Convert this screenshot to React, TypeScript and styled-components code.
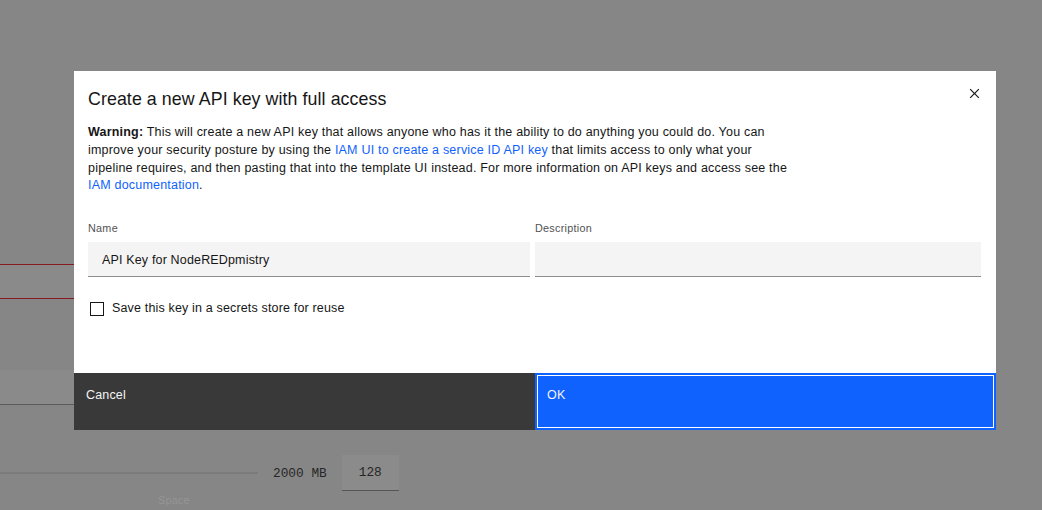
import React from "react";
import styled, { createGlobalStyle } from "styled-components";

const Global = createGlobalStyle`
  html, body { margin: 0; padding: 0; }
  body { font-family: "Liberation Sans", Arial, sans-serif; background: #868686; }
  * { box-sizing: border-box; }
`;

const Page = styled.div`
  position: relative;
  width: 1042px;
  height: 510px;
  overflow: hidden;
  background: #868686;
  display: flex;
  flex-direction: column;
  align-items: flex-start;
`;

const InvalidField = styled.div`
  margin-top: 264px;
  width: 520px;
  height: 35px;
  background: #8a8a8a;
  border-top: 1px solid #861c21;
  border-bottom: 1px solid #861c21;
`;

const PlainField = styled.div`
  margin-top: 71px;
  width: 520px;
  height: 35px;
  background: #8a8a8a;
  border-bottom: 1px solid #5c5c5c;
`;

const SliderRow = styled.div`
  margin-top: 50px;
  display: flex;
  align-items: center;
  height: 36px;
`;

const Track = styled.div`
  width: 258px;
  height: 2px;
  background: #7b7b7b;
`;

const RangeValue = styled.span`
  margin-left: 15px;
  font-family: "Liberation Mono", "DejaVu Sans Mono", monospace;
  font-size: 12.8px;
  color: #262626;
`;

const NumberBox = styled.div`
  margin-left: 15px;
  width: 57px;
  height: 36px;
  background: #8b8b8b;
  border-bottom: 1px solid #555555;
  display: flex;
  align-items: center;
  justify-content: center;
  font-family: "Liberation Mono", "DejaVu Sans Mono", monospace;
  font-size: 12.8px;
  color: #262626;
`;

const FaintLabel = styled.span`
  margin-left: 158px;
  margin-top: 2px;
  font-size: 10.7px;
  line-height: 14px;
  letter-spacing: 0.28px;
  color: #959595;
`;

const Scrim = styled.div`
  position: absolute;
  inset: 0;
  padding: 71px 0 0 74px;
`;

const Modal = styled.div`
  position: relative;
  width: 922px;
  height: 359px;
  background: #ffffff;
  display: flex;
  flex-direction: column;
  color: #161616;
`;

const Header = styled.div`
  padding: 16px 14px 0 14px;
`;

const Title = styled.h2`
  margin: 0;
  font-size: 17.8px;
  line-height: 25px;
  font-weight: 400;
  letter-spacing: 0.08px;
  color: #161616;
`;

const CloseButton = styled.button`
  position: absolute;
  top: 12.5px;
  right: 12.5px;
  width: 19px;
  height: 19px;
  padding: 0;
  border: 0;
  background: transparent;
  display: flex;
  align-items: center;
  justify-content: center;
  cursor: pointer;
`;

const Body = styled.div`
  flex: 1;
  padding: 12px 15px 0 14px;
  display: flex;
  flex-direction: column;
`;

const Warning = styled.p`
  margin: 0;
  font-size: 12.5px;
  line-height: 17.8px;
  letter-spacing: 0.2px;
  white-space: nowrap;
  color: #161616;
`;

const Link = styled.a`
  color: #0f62fe;
  text-decoration: none;
`;

const FieldGrid = styled.div`
  margin-top: 26px;
  display: grid;
  grid-template-columns: 442px 446px;
  column-gap: 5px;
`;

const Field = styled.div`
  display: flex;
  flex-direction: column;
`;

const Label = styled.label`
  font-size: 10.8px;
  line-height: 14px;
  letter-spacing: 0.28px;
  color: #525252;
  margin-bottom: 7px;
`;

const TextInput = styled.input`
  height: 35px;
  width: 100%;
  border: 0;
  border-bottom: 1px solid #8d8d8d;
  background: #f4f4f4;
  padding: 2px 14px 0 14px;
  font-family: "Liberation Sans", Arial, sans-serif;
  font-size: 12.5px;
  letter-spacing: 0.16px;
  color: #161616;
  outline: none;
`;

const CheckRow = styled.label`
  margin-top: 23px;
  display: flex;
  align-items: center;
  gap: 8px;
  font-size: 12.5px;
  line-height: 17.8px;
  letter-spacing: 0.16px;
  color: #161616;
  padding-left: 2px;
`;

const Box = styled.span`
  width: 14px;
  height: 14px;
  border: 1px solid #161616;
  background: #ffffff;
  display: inline-block;
`;

const Footer = styled.div`
  display: grid;
  grid-template-columns: 1fr 1fr;
  height: 57px;
`;

const FooterButton = styled.button<{ $primary?: boolean }>`
  border: 0;
  margin: 0;
  padding: 13.5px 12px;
  text-align: left;
  display: flex;
  align-items: flex-start;
  font-family: "Liberation Sans", Arial, sans-serif;
  font-size: 12.5px;
  line-height: 17.8px;
  letter-spacing: 0.16px;
  color: #f4f4f4;
  background: ${(p) => (p.$primary ? "#0f62fe" : "#393939")};
  box-shadow: ${(p) => (p.$primary ? "inset 0 0 0 2px #0f62fe, inset 0 0 0 3px #ffffff" : "none")};
  cursor: pointer;
`;

export default function App() {
  return (
    <>
      <Global />
      <Page>
        <InvalidField />
        <PlainField />
        <SliderRow>
          <Track />
          <RangeValue>2000 MB</RangeValue>
          <NumberBox>128</NumberBox>
        </SliderRow>
        <FaintLabel>Space</FaintLabel>
        <Scrim>
          <Modal role="dialog" aria-label="Create a new API key with full access">
            <Header>
              <Title>Create a new API key with full access</Title>
            </Header>
            <CloseButton aria-label="Close">
              <svg width="19" height="19" viewBox="0 0 32 32" fill="#161616">
                <path d="M24 9.4L22.6 8 16 14.6 9.4 8 8 9.4 14.6 16 8 22.6 9.4 24 16 17.4 22.6 24 24 22.6 17.4 16 24 9.4z" />
              </svg>
            </CloseButton>
            <Body>
              <Warning>
                <strong>Warning:</strong> This will create a new API key that allows anyone who has it the ability to do anything you could do. You can
                <br />
                improve your security posture by using the <Link href="#">IAM UI to create a service ID API key</Link> that limits access to only what your
                <br />
                pipeline requires, and then pasting that into the template UI instead. For more information on API keys and access see the
                <br />
                <Link href="#">IAM documentation</Link>.
              </Warning>
              <FieldGrid>
                <Field>
                  <Label>Name</Label>
                  <TextInput defaultValue="API Key for NodeREDpmistry" />
                </Field>
                <Field>
                  <Label>Description</Label>
                  <TextInput defaultValue="" />
                </Field>
              </FieldGrid>
              <CheckRow>
                <Box />
                Save this key in a secrets store for reuse
              </CheckRow>
            </Body>
            <Footer>
              <FooterButton>Cancel</FooterButton>
              <FooterButton $primary>OK</FooterButton>
            </Footer>
          </Modal>
        </Scrim>
      </Page>
    </>
  );
}
